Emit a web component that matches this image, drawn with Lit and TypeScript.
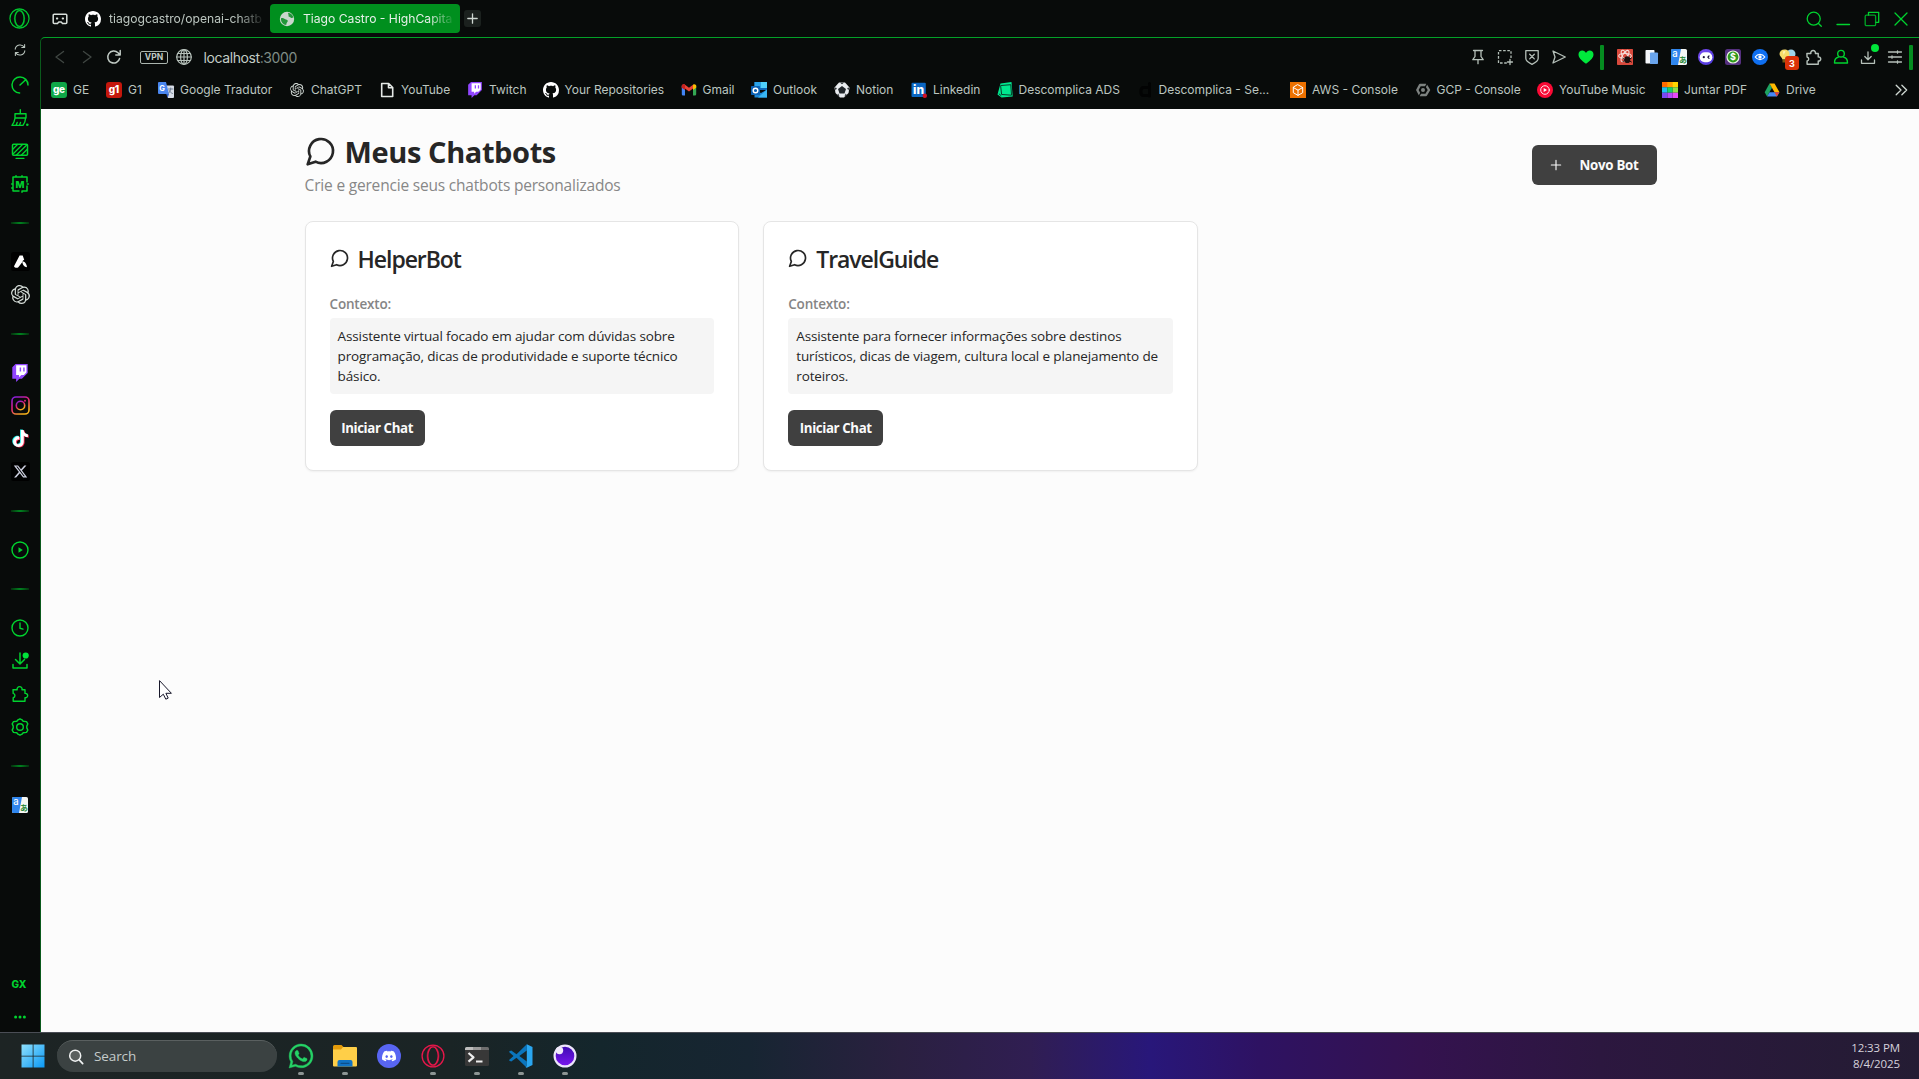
import { LitElement, html, svg, css, TemplateResult } from "lit";
import { customElement } from "lit/decorators.js";

const GITHUB = "M8 0C3.58 0 0 3.58 0 8c0 3.54 2.29 6.53 5.47 7.59.4.07.55-.17.55-.38 0-.19-.01-.82-.01-1.49-2.01.37-2.53-.49-2.69-.94-.09-.23-.48-.94-.82-1.13-.28-.15-.68-.52-.01-.53.63-.01 1.08.58 1.23.82.72 1.21 1.87.87 2.33.66.07-.52.28-.87.51-1.07-1.78-.2-3.64-.89-3.64-3.95 0-.87.31-1.59.82-2.15-.08-.2-.36-1.02.08-2.12 0 0 .67-.21 2.2.82.64-.18 1.32-.27 2-.27s1.36.09 2 .27c1.53-1.04 2.2-.82 2.2-.82.44 1.1.16 1.92.08 2.12.51.56.82 1.27.82 2.15 0 3.07-1.87 3.75-3.65 3.95.29.25.54.73.54 1.48 0 1.07-.01 1.93-.01 2.2 0 .21.15.46.55.38A8.01 8.01 0 0016 8c0-4.42-3.58-8-8-8z";
const OPENAI = "M22.2819 9.8211a5.9847 5.9847 0 0 0-.5157-4.9108 6.0462 6.0462 0 0 0-6.5098-2.9A6.0651 6.0651 0 0 0 4.9807 4.1818a5.9847 5.9847 0 0 0-3.9977 2.9 6.0462 6.0462 0 0 0 .7427 7.0966 5.98 5.98 0 0 0 .511 4.9107 6.051 6.051 0 0 0 6.5146 2.9001A5.9847 5.9847 0 0 0 13.2599 24a6.0557 6.0557 0 0 0 5.7718-4.2058 5.9894 5.9894 0 0 0 3.9977-2.9001 6.0557 6.0557 0 0 0-.7475-7.0729zm-9.022 12.6081a4.4755 4.4755 0 0 1-2.8764-1.0408l.1419-.0804 4.7783-2.7582a.7948.7948 0 0 0 .3927-.6813v-6.7369l2.02 1.1686a.071.071 0 0 1 .038.052v5.5826a4.504 4.504 0 0 1-4.4945 4.4944zm-9.6607-4.1254a4.4708 4.4708 0 0 1-.5346-3.0137l.142.0852 4.783 2.7582a.7712.7712 0 0 0 .7806 0l5.8428-3.3685v2.3324a.0804.0804 0 0 1-.0332.0615L9.74 19.9502a4.4992 4.4992 0 0 1-6.1408-1.6464zM2.3408 7.8956a4.485 4.485 0 0 1 2.3655-1.9728V11.6a.7664.7664 0 0 0 .3879.6765l5.8144 3.3543-2.0201 1.1685a.0757.0757 0 0 1-.071 0l-4.8303-2.7865A4.504 4.504 0 0 1 2.3408 7.872zm16.5963 3.8558L13.1038 8.364 15.1192 7.2a.0757.0757 0 0 1 .071 0l4.8303 2.7913a4.4944 4.4944 0 0 1-.6765 8.1042v-5.6772a.79.79 0 0 0-.407-.667zm2.0107-3.0231l-.142-.0852-4.7735-2.7818a.7759.7759 0 0 0-.7854 0L9.409 9.2297V6.8974a.0662.0662 0 0 1 .0284-.0615l4.8303-2.7866a4.4992 4.4992 0 0 1 6.6802 4.66zM8.3065 12.863l-2.02-1.1638a.0804.0804 0 0 1-.038-.0567V6.0742a4.4992 4.4992 0 0 1 7.3757-3.4537l-.142.0805L8.704 5.459a.7948.7948 0 0 0-.3927.6813zm1.0976-2.3654l2.602-1.4998 2.6069 1.4998v2.9994l-2.5974 1.4997-2.6067-1.4997Z";
const TIKTOK = "M12.525.02c1.31-.02 2.61-.01 3.91-.02.08 1.53.63 3.09 1.75 4.17 1.12 1.11 2.7 1.62 4.24 1.79v4.03c-1.44-.05-2.89-.35-4.2-.97-.57-.26-1.1-.59-1.62-.93-.01 2.92.01 5.84-.02 8.75-.08 1.4-.54 2.79-1.35 3.94-1.31 1.92-3.58 3.17-5.91 3.21-1.43.08-2.86-.31-4.08-1.03-2.02-1.19-3.44-3.37-3.65-5.71-.02-.5-.03-1-.01-1.49.18-1.9 1.12-3.72 2.58-4.96 1.66-1.44 3.98-2.13 6.15-1.72.02 1.48-.04 2.96-.04 4.44-.99-.32-2.15-.23-3.02.37-.63.41-1.11 1.04-1.36 1.75-.21.51-.15 1.07-.14 1.61.24 1.64 1.82 3.02 3.5 2.87 1.12-.01 2.19-.66 2.77-1.61.19-.33.4-.67.41-1.06.1-1.79.06-3.57.07-5.36.01-4.03-.01-8.05.02-12.07z";
const WHATSAPP = "M17.472 14.382c-.297-.149-1.758-.867-2.03-.967-.273-.099-.471-.148-.67.15-.197.297-.767.966-.94 1.164-.173.199-.347.223-.644.075-.297-.15-1.255-.463-2.39-1.475-.883-.788-1.48-1.761-1.653-2.059-.173-.297-.018-.458.13-.606.134-.133.298-.347.446-.52.149-.174.198-.298.298-.497.099-.198.05-.371-.025-.52-.075-.149-.669-1.612-.916-2.207-.242-.579-.487-.5-.669-.51-.173-.008-.371-.01-.57-.01-.198 0-.52.074-.792.372-.272.297-1.04 1.016-1.04 2.479 0 1.462 1.065 2.875 1.213 3.074.149.198 2.096 3.2 5.077 4.487.709.306 1.262.489 1.694.625.712.227 1.36.195 1.871.118.571-.085 1.758-.719 2.006-1.413.248-.694.248-1.289.173-1.413-.074-.124-.272-.198-.57-.347m-5.421 7.403h-.004a9.87 9.87 0 01-5.031-1.378l-.361-.214-3.741.982.998-3.648-.235-.374a9.86 9.86 0 01-1.51-5.26c.001-5.45 4.436-9.884 9.888-9.884 2.64 0 5.122 1.03 6.988 2.898a9.825 9.825 0 012.893 6.994c-.003 5.45-4.437 9.884-9.885 9.884m8.413-18.297A11.815 11.815 0 0012.05 0C5.495 0 .16 5.335.157 11.892c0 2.096.547 4.142 1.588 5.945L.057 24l6.305-1.654a11.882 11.882 0 005.683 1.448h.005c6.554 0 11.89-5.335 11.893-11.893a11.821 11.821 0 00-3.48-8.413Z";
const DISCORD = "M20.317 4.3698a19.7913 19.7913 0 00-4.8851-1.5152.0741.0741 0 00-.0785.0371c-.211.3753-.4447.8648-.6083 1.2495-1.8447-.2762-3.68-.2762-5.4868 0-.1636-.3933-.4058-.8742-.6177-1.2495a.077.077 0 00-.0785-.037 19.7363 19.7363 0 00-4.8852 1.515.0699.0699 0 00-.0321.0277C.5334 9.0458-.319 13.5799.0992 18.0578a.0824.0824 0 00.0312.0561c2.0528 1.5076 4.0413 2.4228 5.9929 3.0294a.0777.0777 0 00.0842-.0276c.4616-.6304.8731-1.2952 1.226-1.9942a.076.076 0 00-.0416-.1057c-.6528-.2476-1.2743-.5495-1.8722-.8923a.077.077 0 01-.0076-.1277c.1258-.0943.2517-.1923.3718-.2914a.0743.0743 0 01.0776-.0105c3.9278 1.7933 8.18 1.7933 12.0614 0a.0739.0739 0 01.0785.0095c.1202.099.246.1981.3728.2924a.077.077 0 01-.0066.1276 12.2986 12.2986 0 01-1.873.8914.0766.0766 0 00-.0407.1067c.3604.698.7719 1.3628 1.225 1.9932a.076.076 0 00.0842.0286c1.961-.6067 3.9495-1.5219 6.0023-3.0294a.077.077 0 00.0313-.0552c.5004-5.177-.8382-9.6739-3.5485-13.6604a.061.061 0 00-.0312-.0286zM8.02 15.3312c-1.1825 0-2.1569-1.0857-2.1569-2.419 0-1.3332.9555-2.4189 2.157-2.4189 1.2108 0 2.1757 1.0952 2.1568 2.419 0 1.3332-.9555 2.4189-2.1569 2.4189zm7.9748 0c-1.1825 0-2.1569-1.0857-2.1569-2.419 0-1.3332.9554-2.4189 2.1569-2.4189 1.2108 0 2.1757 1.0952 2.1568 2.419 0 1.3332-.946 2.4189-2.1568 2.4189Z";
const PUZZLE = "M2 4.800h4.200a2.500 2.500 0 1 1 4.800 0h3v3.600a2.200 2.200 0 1 1 0 4.300v3.500H2.200v-3.500a2.200 2.200 0 0 0 0-4.300z";

type Art = { box: number; body: unknown };
const art = (box: number, body: unknown): Art => ({ box, body });

/** Draws a named glyph in a square of the given size. */
const icon = (name: string, size: number): TemplateResult => {
  const a = ART[name];
  return html`<svg class="ico" width=${size} height=${size} viewBox="0 0 ${a.box} ${a.box}" fill="none" stroke-linecap="round" stroke-linejoin="round">${a.body}</svg>`;
};

const twitch = svg`<path fill="#9146ff" d="M6 0L1.714 4.286v15.428h5.143V24l4.286-4.286h3.428L22.286 12V0z"/><path fill="#fff" d="M20.571 11.143l-3.428 3.428h-3.429l-3 3v-3H6.857V1.714h13.714Z"/><path fill="#9146ff" d="M11.571 4.714h1.9v5.143h-1.9zm4.715 0h1.9v5.143h-1.9z"/>`;
const translate = svg`<rect width="16" height="16" rx="1.6" fill="#f4f6f4"/><path fill="#2f86ee" d="M1.6 0H10L7 16H1.6A1.6 1.6 0 0 1 0 14.400V1.600A1.600 1.600 0 0 1 1.600 0z"/><text x="1.200" y="7.800" font-family="Inter, sans-serif" font-size="9.500" font-weight="500" fill="#fff">a</text><text x="8" y="14.300" font-family="Noto Sans CJK JP, sans-serif" font-size="8" font-weight="700" fill="#2b8a3a">あ</text>`;
const opera = svg`<circle cx="11" cy="11" r="10" /><ellipse cx="11" cy="11" rx="4.800" ry="8.300"/><path d="M8 1.600c4.500-.8 8.300 3.300 8.300 9.400S12.500 21.200 8 20.400M14 1.600C9.500.8 5.700 4.900 5.700 11s3.800 10.200 8.300 9.400" opacity=".55"/>`;

const ART: Record<string, Art> = {
  opera: art(22, svg`<g stroke="#00c92f" stroke-width="1.300">${opera}</g>`),
  operaRed: art(22, svg`<g stroke="#e8174b" stroke-width="1.200">${opera}</g>`),
  sync: art(16, svg`<path stroke="#b9c4bd" stroke-width="1.200" d="M2.500 7A5.700 5.700 0 0 1 13 5M13.500 9A5.700 5.700 0 0 1 3 11M13.300 1.800V5.200H10M2.700 14.200v-3.400H6"/>`),
  gauge: art(18, svg`<path stroke="#00d32f" stroke-width="1.500" d="M8.600 17A8 8 0 1 1 17 9M9 9l6-5.500"/>`),
  broom: art(18, svg`<path stroke="#00d32f" stroke-width="1.400" d="M9.300.7v4M4 4.700h11V9H4zM4 9c-.3 3-1.300 5-3 7.400h11c1.500-2 2.400-4.500 2.600-7.400M5 16.400l1.200-3M8.500 16.400l1-3"/><circle cx="16.300" cy="15.800" r="1.300" fill="#00d32f"/>`),
  monitor: art(18, svg`<rect x="1.500" y="2.200" width="15" height="11" rx="1" stroke="#00d32f" stroke-width="1.500"/><path stroke="#00d32f" stroke-width="1.300" d="M2 7l4.500-4.500M2 12L11.500 2.500M5.500 13L16 2.800M10.500 13l5.500-5.500M5 16.300h8"/>`),
  chip: art(18, svg`<path stroke="#00d32f" stroke-width="1.500" d="M2 2h14v5M16 11v5h-5M8 16H2V2M5 .7v1M11 .7v1M.7 9h1M.7 13h1M17.300 9h-1M11 17.300v-1"/><text x="9" y="12.500" text-anchor="middle" font-family="Inter, sans-serif" font-weight="800" font-size="9.500" fill="#00d32f">M</text>`),
  astra: art(19, svg`<rect width="19" height="19" rx="2.500" fill="#000"/><path fill="#fff" d="M8.600 3.500h3.100l1.500 4.200c-1.300.5-1.700 1.500-2 2.500L7.300 15.300c-1.200 1-3.700.6-4.300-1z"/><path fill="#fff" d="M11.300 9.300c2.400.2 4.500 2.700 4.600 5.900-2.500 0-4.500-2.400-4.600-5.900z"/>`),
  openai: art(24, svg`<path fill="#d5ddd8" d=${OPENAI} />`),
  twitch: art(24, twitch),
  instagram: art(19, svg`<defs><linearGradient id="ig" x1="0" y1="0" x2=".6" y2="1"><stop offset="0" stop-color="#7a1fe8"/><stop offset=".5" stop-color="#e0207a"/><stop offset="1" stop-color="#f5b01a"/></linearGradient></defs><g stroke="url(#ig)" stroke-width="1.600"><rect x="1" y="1" width="17" height="17" rx="4"/><circle cx="9.500" cy="9.500" r="4.200"/></g><circle cx="14" cy="4.700" r="1" fill="#e0207a"/>`),
  tiktok: art(24, svg`<path fill="#25f4ee" d=${TIKTOK} transform="translate(-1.200 -.8)"/><path fill="#fe2c55" d=${TIKTOK} transform="translate(1.200 .8)"/><path fill="#fff" d=${TIKTOK} />`),
  x: art(19, svg`<rect width="19" height="19" rx="2.500" fill="#000"/><path fill="#cdd0e0" transform="translate(2.800 2.800) scale(.56)" d="M18.901 1.153h3.680l-8.040 9.190L24 22.846h-7.406l-5.800-7.584-6.638 7.584H.474l8.600-9.830L0 1.154h7.594l5.243 6.932ZM17.610 20.644h2.039L6.486 3.240H4.298Z"/>`),
  play: art(18, svg`<circle cx="9" cy="9" r="8" stroke="#00d32f" stroke-width="1.400"/><path fill="#00d32f" d="M7.500 6.300v5.400l4.300-2.700z"/>`),
  clock: art(18, svg`<circle cx="9" cy="9" r="8" stroke="#00d32f" stroke-width="1.400"/><path stroke="#00d32f" stroke-width="1.400" d="M9 4v5.300l3 .8"/>`),
  down: art(18, svg`<path stroke="#00d32f" stroke-width="1.500" d="M9 1v10.500M4.500 7.500L9 12l4.500-4.500M2 12.500V16h14v-3.500"/><circle cx="14.700" cy="3.500" r="3.100" fill="#00e53a"/>`),
  puzzle: art(18, svg`<path stroke="#00d32f" stroke-width="1.400" d=${PUZZLE} />`),
  gear: art(18, svg`<path stroke="#00d32f" stroke-width="1.400" d="M7 1.800 9 .8l2 1 1.200 1.500 3.300.3 1.300 2.300-1 2.200v1.800l1 2.200-1.300 2.300-3.300.3L11 16.200l-2 1-2-1-1.200-1.500-3.300-.3-1.300-2.300 1-2.200V8.100l-1-2.200 1.300-2.300 3.300-.3z"/><circle cx="9" cy="9" r="3.300" stroke="#00d32f" stroke-width="1.400"/>`),
  translate: art(16, translate),
  dots: art(14, svg`<g fill="#00d32f"><circle cx="2.600" cy="7" r="1.500"/><circle cx="7" cy="7" r="1.500"/><circle cx="11.400" cy="7" r="1.500"/></g>`),
  bot: art(16, svg`<path stroke="#d9e0dc" stroke-width="1.500" d="M1.200 4.200a1 1 0 0 1 1-1h11.600a1 1 0 0 1 1 1v7.300a1 1 0 0 1-1 1h-3.300l-1.300-1.600H6.800l-1.300 1.600H2.200a1 1 0 0 1-1-1z"/><path stroke="#d9e0dc" stroke-width="1.800" d="M4.800 7.500h.6M10.600 7.500h.6"/>`),
  github: art(16, svg`<path fill="#fff" d=${GITHUB} />`),
  earth: art(16, svg`<circle cx="8" cy="8" r="7.200" fill="#c9d6cc"/><path fill="#058c20" d="M9 1.800c2.700.3 4.700 2 5.300 4.500-.8.900-1.600.9-2.500.4-.5-.9-1.500-.6-2.200-1.300-.3-1 .3-1.300-.2-2zM2.200 7c2-.1 3.300.5 4.600 1.600 1.500.2 2.300.8 1.900 2-.9.900-1.200 1.700-1.500 3.500C4 13.600 2 11 1.900 8.200z" opacity=".85"/>`),
  plus: art(16, svg`<path stroke="#cfd8d2" stroke-width="1.400" d="M8 3v10M3 8h10"/>`),
  search: art(16, svg`<circle cx="7.700" cy="7.700" r="6.500" stroke="#00d32f" stroke-width="1.300"/><path stroke="#00d32f" stroke-width="1.300" d="M12.500 12.500l2.800 2.800"/>`),
  min: art(16, svg`<path stroke="#00d32f" stroke-width="1.300" d="M2 13.500h12.500"/>`),
  restore: art(16, svg`<rect x="1.200" y="4.200" width="10.400" height="10.400" rx="1.200" stroke="#00a626" stroke-width="1.300"/><path stroke="#00d32f" stroke-width="1.300" d="M4.500 4V1.300h10.200v10H12"/>`),
  close: art(16, svg`<path stroke="#00d32f" stroke-width="1.300" d="M2 2l12 12M14 2L2 14"/>`),
  back: art(16, svg`<path stroke="#3f4642" stroke-width="1.400" d="M11.500 2.500L4 8l7.500 5.500"/>`),
  fwd: art(16, svg`<path stroke="#3f4642" stroke-width="1.400" d="M4.500 2.500L12 8l-7.500 5.500"/>`),
  reload: art(16, svg`<path stroke="#c0cac4" stroke-width="1.500" d="M13.600 9.500A6 6 0 1 1 12 3.800l1.800 1.900M14.200 1.500v4.400H9.800"/>`),
  globe: art(16, svg`<g stroke="#b5c0b9" stroke-width="1.200"><circle cx="8" cy="8" r="7.300"/><ellipse cx="8" cy="8" rx="3.400" ry="7.300"/><path d="M8 .7v14.600M.7 8h14.600M1.700 4.500h12.600M1.700 11.500h12.600"/></g>`),
  pin: art(16, svg`<path stroke="#b5c0b9" stroke-width="1.300" d="M3.500 1.500h9M5 1.500v6L2.800 10.700h10.400L11 7.500v-6M8 10.700v4"/>`),
  capture: art(16, svg`<path stroke="#b5c0b9" stroke-width="1.300" stroke-dasharray="2.600 1.600" stroke-linecap="butt" d="M14 9V1.700H1.500V14H10"/><path stroke="#b5c0b9" stroke-width="1.300" d="M13 10.500v5M10.500 13h5"/>`),
  shield: art(16, svg`<path stroke="#b5c0b9" stroke-width="1.300" d="M1.800 1.700h12.400v7.600c0 3-3.500 4.800-6.200 6-2.700-1.200-6.200-3-6.200-6zM5.700 5.300l4.600 4.600M10.300 5.300L5.700 9.900"/>`),
  send: art(16, svg`<path stroke="#b5c0b9" stroke-width="1.300" d="M2 2l12.300 6L2 14l2-6z"/>`),
  heart: art(16, svg`<path fill="#00e83c" d="M8 14.800C3 11 .5 8.400.5 5.400.5 3 2.200 1.500 4.300 1.500 6 1.500 7.300 2.400 8 3.900c.7-1.500 2-2.400 3.700-2.400 2.100 0 3.800 1.500 3.800 3.900 0 3-2.500 5.600-7.500 9.400z"/>`),
  react: art(16, svg`<rect width="16" height="16" rx=".8" fill="#d8493c"/><g stroke="#f6ded9" stroke-width="1.100"><ellipse cx="8" cy="7" rx="6.300" ry="2.500"/><ellipse cx="8" cy="7" rx="6.300" ry="2.500" transform="rotate(60 8 7)"/><ellipse cx="8" cy="7" rx="6.300" ry="2.500" transform="rotate(120 8 7)"/></g><ellipse cx="10.300" cy="10.700" rx="3" ry="3.400" fill="#1b0f0e"/><path stroke="#1b0f0e" d="M6 9.500l2 1M6 12.500l2-1M14.400 9l-2 1.200M14.400 13l-2-1.200"/>`),
  pages: art(16, svg`<rect x="1.500" y="1" width="9" height="13.500" rx=".8" fill="#f4f7fa"/><rect x="6" y="3.500" width="8" height="11.500" rx=".8" fill="#6aa5ec"/>`),
  face: art(16, svg`<defs><linearGradient id="fc" x1="0" y1="0" x2="1" y2="1"><stop offset="0" stop-color="#7b4bf5"/><stop offset="1" stop-color="#4a3ad8"/></linearGradient></defs><circle cx="8" cy="8" r="8" fill="url(#fc)"/><rect x="1.700" y="3.300" width="12.600" height="10" rx="5" fill="#fff"/><circle cx="5.800" cy="8.200" r="1.100" fill="#1c1340"/><path stroke="#1c1340" stroke-width="1.200" d="M11 7l-1.200 1.200L11 9.400"/>`),
  money: art(16, svg`<rect width="16" height="16" rx="2.500" fill="#55307f"/><circle cx="8" cy="8" r="6" fill="#2f9a1c" stroke="#e7f3e2" stroke-width="1.200"/><text x="8" y="11.300" text-anchor="middle" font-family="Inter, sans-serif" font-size="9" font-weight="700" fill="#fff">$</text>`),
  eye: art(16, svg`<circle cx="8" cy="8" r="8" fill="#0f6ff0"/><path stroke="#fff" stroke-width="1.200" d="M3.200 8c2.500-3.600 7.100-3.600 9.600 0-2.500 3.600-7.100 3.600-9.600 0z"/><circle cx="8" cy="8" r="1.700" fill="#fff"/>`),
  bulb: art(16, svg`<circle cx="12" cy="5" r="4.500" fill="#9fd4ea"/><path fill="#f7dc6a" d="M5.500.5c3 0 5 2 5 4.500 0 2.200-2 3-2.500 5.500H3.500C3 8 .5 7.200.5 5c0-2.500 2-4.500 5-4.500z"/><rect x="3.500" y="10.500" width="4.500" height="3" fill="#7c5b14"/><path fill="#fff3b8" d="M4 2.500c1-.8 2-.8 2.500 0L4.500 6z"/>`),
  puzzleGrey: art(18, svg`<path stroke="#b5c0b9" stroke-width="1.500" d=${PUZZLE} />`),
  person: art(16, svg`<circle cx="8" cy="4.700" r="3.300" stroke="#00d32f" stroke-width="1.400"/><path stroke="#00d32f" stroke-width="1.400" d="M5.200 8.300c-2.700.4-3.700 2.200-3.700 5.700h13c0-3.500-1-5.300-3.700-5.700"/>`),
  downGrey: art(16, svg`<path stroke="#b5c0b9" stroke-width="1.300" d="M8 3v7.500M4.800 7.500L8 10.700l3.200-3.200M1.500 11v3.300h13V11"/>`),
  sliders: art(16, svg`<path stroke="#b5c0b9" stroke-width="1.300" d="M1.500 3h13M1.500 8h13M1.500 13h13M10.500 1.800v2.400M5 6.800v2.400M10.500 11.800v2.400"/>`),
  ge: art(16, svg`<rect width="16" height="16" rx="3" fill="#0fa748"/><text x="7.800" y="10.800" text-anchor="middle" font-family="Inter, sans-serif" font-size="10" font-weight="800" letter-spacing="-.4" fill="#fff">ge</text>`),
  g1: art(16, svg`<rect width="16" height="16" rx="3" fill="#c4170c"/><text x="7.800" y="10.800" text-anchor="middle" font-family="Inter, sans-serif" font-size="10" font-weight="800" letter-spacing="-.4" fill="#fff">g1</text>`),
  gtrad: art(16, svg`<path fill="#d6dce6" d="M6 3.500h9a1 1 0 0 1 1 1V15a1 1 0 0 1-1 1h-5z"/><path fill="#4a86ee" d="M1 0h7l3 12H1a1 1 0 0 1-1-1V1a1 1 0 0 1 1-1z"/><path fill="#2f5fc4" d="M8.300 12H11l-1.400 4z"/><text x="1.200" y="8.600" font-family="Inter, sans-serif" font-size="7.500" font-weight="700" fill="#fff">G</text><path stroke="#68768a" stroke-width=".9" d="M10.500 7h4.500M12.700 6v1c-.2 2-1 3-2 4M11.200 8.500c.6 1.300 1.600 2.300 3.300 3"/>`),
  file: art(16, svg`<path stroke="#e4e9e6" stroke-width="1.600" d="M2.700 1.500h7l4 4v9h-11zM9.500 1.500v4.200h4.200"/>`),
  gmail: art(16, svg`<path fill="#4285f4" d="M.8 3.500l3.200 2.300V13.500H2a1.200 1.200 0 0 1-1.200-1.200z"/><path fill="#34a853" d="M15.200 3.500L12 5.800v7.700h2a1.200 1.200 0 0 0 1.200-1.200z"/><path fill="#ea4335" d="M.8 4.200C.8 2.500 2.600 1.800 4 2.800l4 3 4-3v3.700L8 9.500 4 6.500.8 5.700z"/><path fill="#fbbc04" d="M12 2.800c1.400-1 3.200-.3 3.200 1.400v1.500L12 8z"/><path fill="#c5221f" d="M.8 4.200C.8 2.500 2.600 1.800 4 2.800V8L.8 5.700z"/>`),
  outlook: art(16, svg`<path fill="#0f66b8" d="M3.500 0H16v8H3.500z"/><path fill="#4fd0fb" d="M9.500 0H16v6H9.500z"/><path fill="#2aa3e8" d="M3.500 0h6v6h-6z"/><path fill="#1b86d6" d="M3.500 8l6.500 3 6-3.500V15.500H3.500z"/><path fill="#38b6f2" d="M16 7.500L7 15.500h9z"/><rect y="4" width="9" height="9" rx=".8" fill="#0c62b4"/><circle cx="4.500" cy="8.500" r="2.300" stroke="#fff" stroke-width="1.400"/>`),
  ball: art(16, svg`<path fill="#e9ecef" d="M5 .5h6l4.500 5L14.500 11 10 15.500H6L1.500 11 .5 5.500z"/><path fill="#20262a" d="M8 4l4 3-1.500 4.500h-5L4 7zM6.200.8h3.600L8 2.300zM.8 5.500l2 .6L1.700 8.500zM15.200 5.500l-2 .6 1.100 2.400zM3.300 13l.9-1.600 1.400 3zM12.700 13l-.9-1.600-1.400 3z"/>`),
  linkedin: art(16, svg`<rect x=".5" y=".7" width="14.300" height="14.300" rx="1" fill="#0a66c2"/><text x="7.600" y="12.400" text-anchor="middle" font-family="Inter, sans-serif" font-size="12" font-weight="800" fill="#fff">in</text><circle cx="13.800" cy="13.800" r="2.200" fill="#d11124"/>`),
  desc: art(16, svg`<path fill="#00e88f" d="M3.500 1.500L14.500 0l1.200 14.500L4.500 15.500.5 12.500z"/><path stroke="#083d2b" stroke-width="1" d="M4 3.500l9.800-.8.700 10.500-9.500-.7zM2.200 12l1.800 1.500"/>`),
  descDark: art(16, svg`<path stroke="#020303" stroke-width="3" d="M12.500 1.500v12.500M12 5.500H6.500C3 5.500 3 13.500 6.500 13.500H12"/>`),
  aws: art(16, svg`<rect width="16" height="16" fill="#ed7100"/><path stroke="#fff" stroke-width="1" d="M8 2.800l4.700 2.700v5.200L8 13.400l-4.700-2.700V5.500zM3.300 5.500L8 8.200l4.700-2.700M8 8.200v5.200"/>`),
  gcp: art(16, svg`<path stroke="#7d8280" stroke-width="2.400" stroke-linejoin="round" d="M5 3h6l3 5-3 5H5L2.300 8z"/><circle cx="8" cy="8" r="2" fill="#7d8280"/><path stroke="#080b0a" stroke-width="1.200" d="M12.500 1l-2 3.500M3.500 15l2-3.500"/>`),
  ytm: art(16, svg`<circle cx="8" cy="8" r="8" fill="#fb0a35"/><circle cx="8" cy="8" r="4.300" stroke="#fff" stroke-width=".9"/><path fill="#fff" d="M6.700 5.900v4.200L10 8z"/>`),
  ilove: art(16, svg`<path fill="#ff6a00" d="M0 0h11v5.300H0z"/><path fill="#ff9d00" d="M5.300 0H11v5.300H5.300z"/><path fill="#ffd400" d="M10.700 0H16v5.300h-5.300z"/><path fill="#1fc0f0" d="M0 5.300h5.300v5.400H0z"/><path fill="#18d06c" d="M5.300 5.300h5.400v5.400H5.300z"/><path fill="#8fe04b" d="M10.700 5.300H16v5.400h-5.300z"/><path fill="#7a48f2" d="M0 10.700h5.300V16H0z"/><path fill="#b44bf8" d="M5.300 10.700h5.400V16H5.300z"/><path fill="#e748f8" d="M10.700 10.700H16V16h-5.300z"/>`),
  drive: art(16, svg`<path fill="#1ea362" d="M5.500 1.500L8 5.800l-5 8.700L.7 10.300z"/><path fill="#ffba00" d="M5.500 1.500h5l5 8.800h-5z"/><path fill="#4688f4" d="M5.500 10.300h9.900L13 14.600H3z"/><path fill="#e54335" d="M12.800 14.600l2.600-4.300h-5z"/>`),
  more: art(16, svg`<path stroke="#cfd8d2" stroke-width="1.500" d="M2.500 2.500l5.500 5.500-5.500 5.500M9 2.500l5.500 5.500L9 13.500"/>`),
  chat: art(24, svg`<path stroke="#262626" stroke-width="2" d="M7.900 20A9 9 0 1 0 4 16.100L2 22Z"/>`),
  plusBtn: art(24, svg`<path stroke="#fafafa" stroke-width="1.700" d="M5 12h14M12 5v14"/>`),
  windows: art(24, svg`<defs><linearGradient id="wn" x1="0" y1="0" x2="1" y2="1"><stop offset="0" stop-color="#8fe0fd"/><stop offset="1" stop-color="#0a98f5"/></linearGradient></defs><path fill="url(#wn)" d="M.5.5h11.200v11.200H.5zM12.500.5h11v11.200h-11zM.5 12.500h11.200v11H.5zM12.500 12.500h11v11h-11z"/>`),
  lens: art(16, svg`<circle cx="7.200" cy="6.700" r="5.500" fill="#5a605f" stroke="#f0f2f2" stroke-width="1.500"/><path stroke="#f0f2f2" stroke-width="1.700" d="M11.200 10.900l3.500 3.800"/>`),
  whatsapp: art(24, svg`<path fill="#25d366" stroke="#25d366" stroke-width=".4" d=${WHATSAPP} />`),
  folder: art(24, svg`<path fill="#e39a0a" d="M0 2.500a1.500 1.500 0 0 1 1.500-1.500h7l2 2V6H0z"/><path fill="#ffcf48" d="M0 5.500h8l2-2.500h13a1 1 0 0 1 1 1v17.500a1 1 0 0 1-1 1H1a1 1 0 0 1-1-1z"/><path fill="#1173c5" d="M4.500 22.500V18a2 2 0 0 1 2-2h11a2 2 0 0 1 2 2v4.500z"/><path stroke="#0d4f8c" stroke-width="1.200" d="M8 19.300h8"/>`),
  discord: art(24, svg`<circle cx="12" cy="12" r="12" fill="#5865f2"/><path fill="#fff" transform="translate(5 5) scale(.585)" d=${DISCORD} />`),
  terminal: art(24, svg`<path fill="#383838" d="M0 5.500h24v15a1.500 1.500 0 0 1-1.500 1.500h-21A1.500 1.500 0 0 1 0 20.500z"/><path fill="#bdbdbd" d="M0 4.500A1.500 1.500 0 0 1 1.500 3H8v3H0z"/><path fill="#9a9a9a" d="M8 3h8v3H8z"/><path fill="#6e6e6e" d="M16 3h6.500A1.500 1.500 0 0 1 24 4.500V6h-8z"/><path stroke="#eee" stroke-width="2.200" stroke-linecap="butt" d="M3.500 9l5 4.300-5 4.300M11 17.500h6.500"/>`),
  vscode: art(24, svg`<path fill="#0b75bd" fill-rule="evenodd" d="M17.800.3L7.500 10.200 2.300 6.400.3 7.300v1L4.500 12 .3 15.700v1l2 .9 5.200-3.800L17.800 23.700zM17.800 6.500v11L10.300 12z"/><path fill="#2aa6f0" d="M17.800.3L23.500 3v18l-5.700 2.700-1.300-.7 1.300-.7V.9z"/>`),
  orb: art(24, svg`<defs><linearGradient id="ob" x1="0" y1="0" x2="0" y2="1"><stop offset="0" stop-color="#3c0bb0"/><stop offset="1" stop-color="#7a16f0"/></linearGradient></defs><circle cx="12" cy="12" r="10.400" fill="url(#ob)" stroke="#ece4fb" stroke-width="2.200"/><circle cx="6.500" cy="6.500" r="3.700" fill="#efe9fb"/>`),
  cursor: art(22, svg`<path fill="#fff" stroke="#17172a" stroke-width="1" d="M1.500 1v16.500l3.800-3.300 2.500 5 2.400-1.100-2.300-4.800h5.100z"/>`),
};

const SIDEBAR: [string, number][] = [
  ["gauge", 18], ["broom", 18], ["monitor", 18], ["chip", 18], ["-", 0],
  ["astra", 19], ["openai", 19], ["-", 0],
  ["twitch", 18], ["instagram", 19], ["tiktok", 17], ["x", 19], ["-", 0],
  ["play", 18], ["-", 0],
  ["clock", 18], ["down", 18], ["puzzle", 18], ["gear", 18], ["-", 0],
  ["translate", 16],
];

/** Bookmark icon, label and slot width. */
const BOOKMARKS: [string, string, number][] = [
  ["ge", "GE", 55], ["g1", "G1", 52], ["gtrad", "Google Tradutor", 131], ["openai", "ChatGPT", 90],
  ["file", "YouTube", 88], ["twitch", "Twitch", 75.500], ["github", "Your Repositories", 138], ["gmail", "Gmail", 70.500],
  ["outlook", "Outlook", 83], ["ball", "Notion", 77], ["linkedin", "Linkedin", 85.5], ["desc", "Descomplica ADS", 140],
  ["descDark", "Descomplica - Se...", 153.500], ["aws", "AWS - Console", 124.500], ["gcp", "GCP - Console", 122.500],
  ["ytm", "YouTube Music", 125], ["ilove", "Juntar PDF", 102], ["drive", "Drive", 60],
];

const BOTS = [
  { name: "HelperBot", lines: ["Assistente virtual focado em ajudar com dúvidas sobre", "programação, dicas de produtividade e suporte técnico", "básico."] },
  { name: "TravelGuide", lines: ["Assistente para fornecer informações sobre destinos", "turísticos, dicas de viagem, cultura local e planejamento de", "roteiros."] },
];

const APPS: [string, boolean][] = [["whatsapp", true], ["folder", true], ["discord", false], ["operaRed", true], ["terminal", true], ["vscode", true], ["orb", true]];

@customElement("app-root")
export class AppRoot extends LitElement {
  static styles = css`
    :host { display: flex; flex-direction: column; width: 1919px; height: 1079px; overflow: hidden; position: relative; background: #080b0a; font-family: Inter, "Liberation Sans", sans-serif; }
    * { box-sizing: border-box; }
    .ico { display: block; flex: none; overflow: visible; }
    .browser { display: flex; height: 1032px; }
    .side { width: 40px; flex: none; display: flex; flex-direction: column; align-items: center; }
    .side .logo { height: 37px; display: flex; align-items: center; margin-left: -1px; }
    .side .sync { height: 26px; display: flex; align-items: center; margin-bottom: 5px; }
    .cell { height: 33px; display: flex; align-items: center; }
    .sep { height: 45px; display: flex; align-items: center; }
    .sep::before { content: ""; width: 18px; height: 2px; background: linear-gradient(90deg, #04300d, #007d1e 45%, #007d1e 55%, #04300d); }
    .gap { flex: 1; }
    .gx { height: 33px; display: flex; align-items: center; font-size: 10px; font-weight: 800; color: #00d32f; margin-left: -2px; }
    .dots { height: 32px; display: flex; align-items: center; padding-top: 2px; margin-left: -1px; }
    .win { flex: 1; display: flex; flex-direction: column; min-width: 0; }
    .tabs { height: 37px; flex: none; display: flex; align-items: center; padding: 0 10px 0 12px; font-size: 12.150px; color: #bcc6c0; }
    .tab { display: flex; align-items: center; gap: 8px; height: 29px; width: 185px; padding-left: 9px; margin-left: 8px; }
    .tab.on { width: 190px; background: #008f1e; border-radius: 4px; color: #e5efe8; margin: 0 4px 0 9px; }
    .label { white-space: nowrap; mask-image: linear-gradient(90deg, #000 84%, transparent 102%); }
    .new { width: 17px; height: 17px; border-radius: 3px; background: #1b211e; display: grid; place-items: center; }
    .wc { margin-left: auto; display: flex; gap: 13px; }
    .frame { flex: 1; display: flex; flex-direction: column; border-left: 1px solid #0a5a1c; border-top: 1px solid #03a028; border-top-left-radius: 5px; overflow: hidden; }
    .addr { height: 38px; flex: none; display: flex; align-items: center; padding: 0 6px 0 11px; }
    .nav { display: flex; gap: 11px; }
    .vpn { margin-left: 18px; width: 28px; height: 13px; border: 1px solid #aab5ae; border-radius: 2px; font-size: 8.500px; font-weight: 700; color: #c0cac4; display: grid; place-items: center; margin-right: 8px; }
    .url { margin-left: 11.500px; font-size: 14px; letter-spacing: -.4px; color: #c3cdc6; }
    .url span { color: #7f8c85; }
    .tools { margin-left: auto; display: flex; align-items: center; }
    .slot { width: 27px; display: flex; justify-content: center; position: relative; }
    .rule { width: 4px; height: 25px; border-radius: 1px; background: #058c20; }
    .rule.first { margin: 0 7px 0 1px; }
    .rule.last { margin-left: 1px; }
    .badge { position: absolute; left: 12px; top: 7px; width: 14px; height: 14px; border-radius: 3px; background: #dc3208; color: #fff; font-size: 9px; font-weight: 700; display: grid; place-items: center; }
    .ping { position: absolute; left: 17px; top: -5px; width: 8px; height: 8px; border-radius: 50%; background: #00e53a; }
    .marks { height: 33px; flex: none; display: flex; align-items: center; padding: 0 11px 6px 10px; }
    .mark { display: flex; align-items: center; gap: 6px; height: 16px; flex: none; font-size: 12px; color: #bcc6c0; white-space: nowrap; }
    .mk { width: 16px; height: 16px; display: grid; place-items: center; }
    .marks > .ico { margin-left: auto; }
    .page { flex: 1; background: #fcfcfc; font-family: "Open Sans", "Noto Sans", sans-serif; color: #262626; }
    .wrap { width: 1352px; margin-left: 263.600px; padding-top: 24px; }
    .head { display: flex; justify-content: space-between; align-items: center; margin-bottom: 24px; }
    .title { display: flex; align-items: center; gap: 8px; height: 36px; font: 700 29px/36px "Open Sans", sans-serif; letter-spacing: -.4px; }
    .title span { padding-top: 1px; }
    .sub { margin-top: 4px; font-size: 15.500px; line-height: 24px; color: #878787; letter-spacing: -.19px; }
    .btn { display: flex; align-items: center; background: #404040; color: #fafafa; border-radius: 6px; font-weight: 700; font-size: 13.300px; white-space: nowrap; }
    .btn.new-bot { width: 125px; height: 40px; padding-left: 16px; gap: 16px; letter-spacing: -.3px; }
    .btn.start { width: 95px; height: 36px; justify-content: center; letter-spacing: -.4px; }
    .grid { display: grid; grid-template-columns: repeat(3, 1fr); gap: 24px; }
    .card { background: #fff; border: 1px solid #e5e5e5; border-radius: 8px; padding: 24px; height: 250px; box-shadow: 0 1px 2px rgba(0,0,0,.05); display: flex; flex-direction: column; }
    .name { display: flex; align-items: center; gap: 8px; height: 26px; font-size: 23px; font-weight: 600; letter-spacing: -1.050px; }
    .name .ico { margin-bottom: 2px; }
    .ctx { margin-top: 22px; height: 20px; font-size: 13.500px; line-height: 20px; font-weight: 600; color: #858585; letter-spacing: -.2px; }
    .text { margin-top: 4px; background: #f5f5f5; border-radius: 4px; padding: 8px; font-size: 13.500px; line-height: 20px; height: 76px; white-space: nowrap; letter-spacing: -.130px; margin-bottom: 16px; }
    .bar { height: 47px; flex: none; display: flex; align-items: center; border-top: 1px solid #4a4d55; padding: 0 19px 0 20.500px; background: linear-gradient(90deg, #1d2424 0, #1a2425 450px, #14262c 600px, #172532 750px, #2a2040 900px, #301e52 1030px, #28177a 1150px, #2e1262 1260px, #34124f 1420px, #2c173f 1600px, #241c33 1919px); font-family: "Open Sans", sans-serif; }
    .find { width: 220px; height: 32px; margin: 0 2px 0 12.500px; border-radius: 16px; background: #3b4242; border-top: 1px solid #5a6060; display: flex; align-items: center; gap: 10px; padding-left: 11px; font-size: 13.500px; letter-spacing: -.1px; color: #c5cbca; }
    .find span { margin-top: -2px; }
    .app { width: 44px; height: 46px; display: flex; flex-direction: column; align-items: center; padding-top: 11px; }
    .app i { width: 6px; height: 3px; border-radius: 2px; background: #8d9594; margin-top: 4px; }
    .time { margin-left: auto; text-align: right; font-size: 11.500px; line-height: 16px; color: #d6d2dc; letter-spacing: -.1px; }
    .cursor { position: absolute; left: 158px; top: 680px; }
  `;

  render() {
    return html`
      <div class="browser">
        <nav class="side">
          <div class="logo">${icon("opera", 21)}</div>
          <div class="sync">${icon("sync", 14)}</div>
          ${SIDEBAR.map(([n, s]) => (n === "-" ? html`<div class="sep"></div>` : html`<div class="cell">${icon(n, s)}</div>`))}
          <div class="gap"></div>
          <div class="gx">GX</div>
          <div class="dots">${icon("dots", 14)}</div>
        </nav>
        <div class="win">
          <div class="tabs">
            ${icon("bot", 16)}
            <div class="tab">${icon("github", 16)}<span class="label">tiagogcastro/openai-chatb</span></div>
            <div class="tab on">${icon("earth", 16)}<span class="label">Tiago Castro - HighCapita</span></div>
            <div class="new">${icon("plus", 15)}</div>
            <div class="wc">${["search", "min", "restore", "close"].map((n) => icon(n, 16))}</div>
          </div>
          <div class="frame">
            <div class="addr">
              <div class="nav">${icon("back", 16)}${icon("fwd", 16)}${icon("reload", 16)}</div>
              <div class="vpn">VPN</div>
              ${icon("globe", 16)}
              <div class="url">localhost<span>:3000</span></div>
              <div class="tools">
                ${["pin", "capture", "shield", "send", "heart"].map((n) => html`<div class="slot">${icon(n, 16)}</div>`)}
                <div class="rule first"></div>
                ${["react", "pages", "translate", "face", "money", "eye"].map((n) => html`<div class="slot">${icon(n, 16)}</div>`)}
                <div class="slot">${icon("bulb", 16)}<span class="badge">3</span></div>
                <div class="slot">${icon("puzzleGrey", 17)}</div>
                <div class="slot">${icon("person", 16)}</div>
                <div class="slot">${icon("downGrey", 16)}<span class="ping"></span></div>
                <div class="slot">${icon("sliders", 16)}</div>
                <div class="rule last"></div>
              </div>
            </div>
            <div class="marks">
              ${BOOKMARKS.map(([n, t, w]) => html`<div class="mark" style="width:${w}px"><div class="mk">${icon(n, n === "openai" ? 14 : 16)}</div><span>${t}</span></div>`)}
              ${icon("more", 14)}
            </div>
            <main class="page">
              <div class="wrap">
                <header class="head">
                  <div>
                    <div class="title">${icon("chat", 32)}<span>Meus Chatbots</span></div>
                    <div class="sub">Crie e gerencie seus chatbots personalizados</div>
                  </div>
                  <div class="btn new-bot">${icon("plusBtn", 16)}<span>Novo Bot</span></div>
                </header>
                <div class="grid">
                  ${BOTS.map((b) => html`
                    <article class="card">
                      <div class="name">${icon("chat", 20)}<span>${b.name}</span></div>
                      <div class="ctx">Contexto:</div>
                      <div class="text">${b.lines.map((l) => html`<div>${l}</div>`)}</div>
                      <div class="btn start">Iniciar Chat</div>
                    </article>`)}
                </div>
              </div>
            </main>
          </div>
        </div>
      </div>
      <footer class="bar">
        ${icon("windows", 24)}
        <div class="find">${icon("lens", 16)}<span>Search</span></div>
        ${APPS.map(([n, open]) => html`<div class="app">${icon(n, 24)}${open ? html`<i></i>` : null}</div>`)}
        <div class="time"><div>12:33 PM</div><div>8/4/2025</div></div>
      </footer>
      <div class="cursor">${icon("cursor", 22)}</div>
    `;
  }
}
